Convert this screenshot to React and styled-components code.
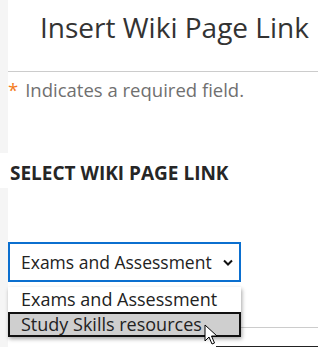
import React from 'react'
import styled, { createGlobalStyle } from 'styled-components'

const Global = createGlobalStyle`
  html, body { margin:0; padding:0; background:#fff; }
  body { font-family:"Open Sans", "Liberation Sans", sans-serif; width:318px; height:347px; overflow:hidden; }
`

const Page = styled.div`
  display:grid;
  grid-template-columns:8px 1fr;
  height:347px;
  position:relative;
`

const Rail = styled.div`
  background:#f5f5f5;
  display:flex;
  flex-direction:column;
`

const RailGap = styled.div`
  margin-top:153px;
  height:35px;
  background:#fff;
`

const Main = styled.div`
  display:flex;
  flex-direction:column;
  position:relative;
`

const Header = styled.div`
  height:72px;
  border-bottom:1px solid #cccccc;
  display:flex;
  align-items:flex-start;
  padding-left:32px;
  box-sizing:border-box;
`

const Title = styled.h1`
  margin:9px 0 0;
  font-size:28px;
  font-weight:400;
  line-height:36px;
  color:#333;
  white-space:nowrap;
`

const Required = styled.p`
  margin:5px 0 0;
  font-size:18.5px;
  line-height:25px;
  color:#707070;
  display:flex;
  gap:7px;
  white-space:nowrap;
`

const Star = styled.span`
  color:#f47b20;
`

const Label = styled.h2`
  margin:58px 0 0 2px;
  font-size:19px;
  font-weight:700;
  line-height:26px;
  color:#262626;
  white-space:nowrap;
`

const SelectBox = styled.div`
  margin-top:56px;
  width:233px;
  height:40px;
  box-sizing:border-box;
  border:2px solid #0b6fcf;
  display:flex;
  align-items:center;
  justify-content:space-between;
  padding:0 6px 0 11px;
  font-size:17.5px;
  color:#222;
  white-space:nowrap;
`

const Menu = styled.ul`
  position:absolute;
  left:0;
  top:287px;
  width:233px;
  margin:0;
  padding:0;
  list-style:none;
  background:#fff;
  box-shadow:1px 2px 4px rgba(0,0,0,0.35);
  z-index:2;
`

const Option = styled.li`
  height:25px;
  box-sizing:border-box;
  font-size:18px;
  line-height:21px;
  color:#222;
  padding:${p => (p.$active ? '0 0 0 11px' : '2px 0 0 13px')};
  background:${p => (p.$active ? '#cfcfcf' : '#fff')};
  border:${p => (p.$active ? '2px solid #111' : 'none')};
  white-space:nowrap;
`

const BackLine = styled.div`
  position:absolute;
  left:233px;
  right:0;
  top:327px;
  border-top:1px solid #cccccc;
`

const BottomLine = styled.div`
  position:absolute;
  left:208px;
  right:0;
  top:346px;
  border-top:1px solid #222;
`

const Cursor = styled.svg`
  position:absolute;
  left:196px;
  top:324px;
  z-index:3;
`

function Chevron() {
  return (
    <svg width="10" height="7" viewBox="0 0 10 7">
      <path d="M1 1.5 L5 5.5 L9 1.5" fill="none" stroke="#111" strokeWidth="2" />
    </svg>
  )
}

export default function App() {
  return (
    <>
      <Global />
      <Page>
        <Rail>
          <RailGap />
        </Rail>
        <Main>
          <Header>
            <Title>Insert Wiki Page Link</Title>
          </Header>
          <Required>
            <Star>*</Star>
            Indicates a required field.
          </Required>
          <Label>SELECT WIKI PAGE LINK</Label>
          <SelectBox>
            <span>Exams and Assessment</span>
            <Chevron />
          </SelectBox>
          <BackLine />
          <BottomLine />
          <Menu>
            <Option>Exams and Assessment</Option>
            <Option $active>Study Skills resources</Option>
          </Menu>
          <Cursor width="14" height="22" viewBox="0 0 14 22">
            <path d="M1 1 L1 17 L5 13 L8 20 L10.5 19 L7.5 12 L13 12 Z" fill="#fff" stroke="#000" strokeWidth="1" strokeLinejoin="round" />
          </Cursor>
        </Main>
      </Page>
    </>
  )
}
